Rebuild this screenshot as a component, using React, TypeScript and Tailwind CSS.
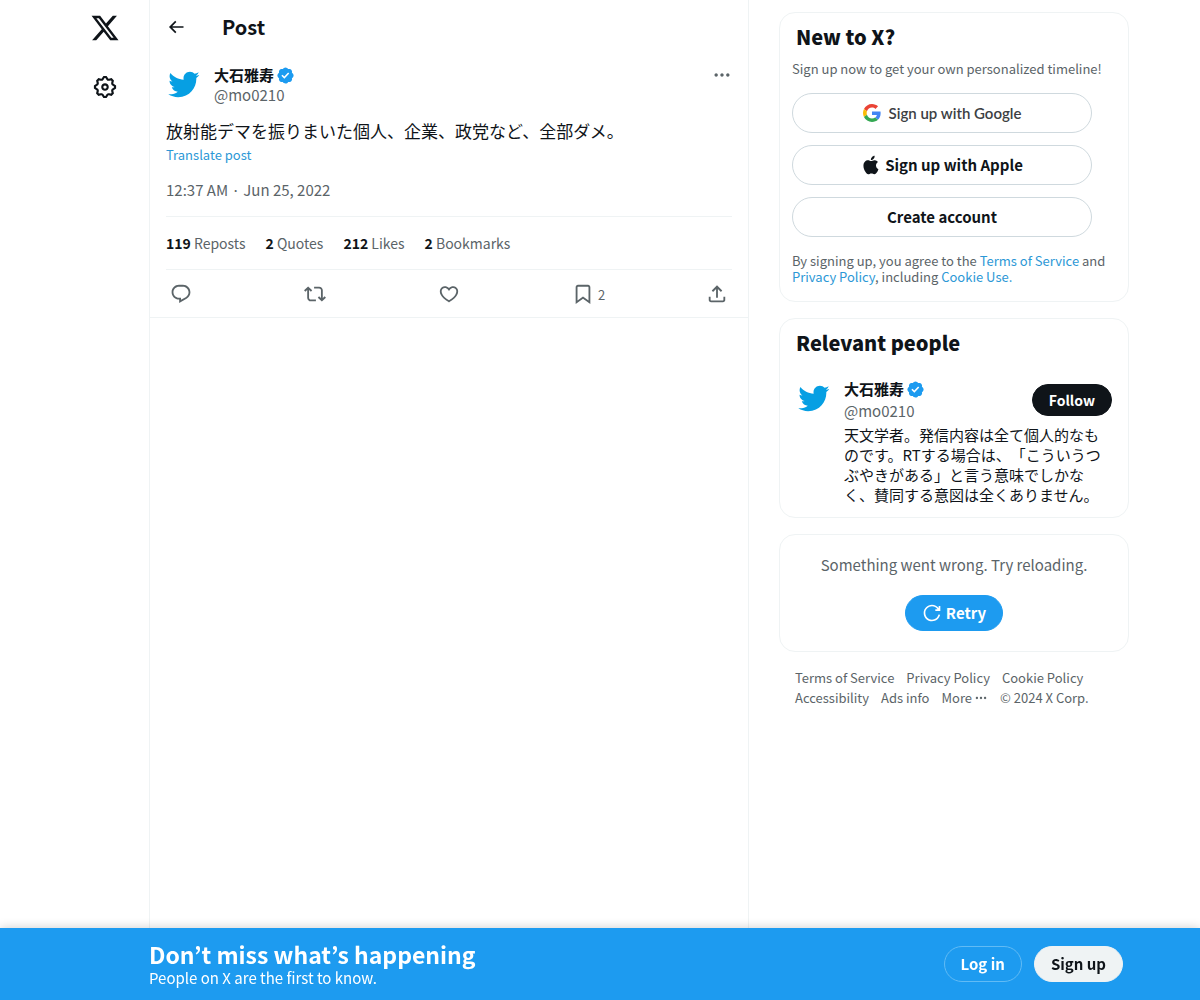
import React from 'react';

const paths = {
  x: 'M18.244 2.25h3.308l-7.227 8.26 8.502 11.24H16.17l-5.214-6.817L4.99 21.75H1.68l7.73-8.835L1.254 2.25H8.08l4.713 6.231zm-1.161 17.52h1.833L7.084 4.126H5.117z',
  settings: 'M10.54 1.75h2.92l1.57 2.36c.11.17.32.25.53.21l2.53-.59 2.17 2.17-.58 2.54c-.05.2.04.41.21.53l2.36 1.57v2.92l-2.36 1.57c-.17.12-.26.33-.21.53l.58 2.54-2.17 2.17-2.53-.59c-.21-.04-.42.04-.53.21l-1.57 2.36h-2.92l-1.58-2.36c-.11-.17-.32-.25-.52-.21l-2.54.59-2.17-2.17.58-2.54c.05-.2-.03-.41-.21-.53l-2.35-1.57v-2.92L4.1 8.97c.18-.12.26-.33.21-.53L3.73 5.9 5.9 3.73l2.54.59c.2.04.41-.04.52-.21l1.58-2.36zm1.07 2l-.98 1.47C10.05 6.08 9 6.5 7.99 6.27l-1.46-.34-.6.6.33 1.46c.24 1.01-.18 2.07-1.05 2.64l-1.46.98v.78l1.46.98c.87.57 1.29 1.63 1.05 2.64l-.33 1.46.6.6 1.46-.34c1.01-.23 2.06.19 2.64 1.05l.98 1.47h.78l.97-1.47c.58-.86 1.63-1.28 2.65-1.05l1.45.34.61-.6-.34-1.46c-.23-1.01.18-2.07 1.05-2.64l1.47-.98v-.78l-1.47-.98c-.87-.57-1.28-1.63-1.05-2.64l.34-1.46-.61-.6-1.45.34c-1.02.23-2.07-.19-2.65-1.05l-.97-1.47h-.78zM12 10.5c-.83 0-1.5.67-1.5 1.5s.67 1.5 1.5 1.5c.82 0 1.5-.67 1.5-1.5s-.68-1.5-1.5-1.5zM8.5 12c0-1.93 1.56-3.5 3.5-3.5 1.93 0 3.5 1.57 3.5 3.5s-1.57 3.5-3.5 3.5c-1.94 0-3.5-1.57-3.5-3.5z',
  back: 'M7.414 13l5.043 5.04-1.414 1.42L3.586 12l7.457-7.46 1.414 1.42L7.414 11H21v2H7.414z',
  more: 'M3 12c0-1.1.9-2 2-2s2 .9 2 2-.9 2-2 2-2-.9-2-2zm9 2c1.1 0 2-.9 2-2s-.9-2-2-2-2 .9-2 2 .9 2 2 2zm7 0c1.1 0 2-.9 2-2s-.9-2-2-2-2 .9-2 2 .9 2 2 2z',
  reply: 'M1.751 10c0-4.42 3.584-8 8.005-8h4.366c4.49 0 8.129 3.64 8.129 8.13 0 2.96-1.607 5.68-4.196 7.11l-8.054 4.46v-3.69h-.067c-4.49.1-8.183-3.51-8.183-8.01zm8.005-6c-3.317 0-6.005 2.69-6.005 6 0 3.37 2.77 6.08 6.138 6.01l.351-.01h1.761v2.3l5.087-2.81c1.951-1.08 3.163-3.13 3.163-5.36 0-3.39-2.744-6.13-6.129-6.13H9.756z',
  repost: 'M4.5 3.88l4.432 4.14-1.364 1.46L5.5 7.55V16c0 1.1.896 2 2 2H13v2H7.5c-2.209 0-4-1.79-4-4V7.55L1.432 9.48.068 8.02 4.5 3.88zM16.5 6H11V4h5.5c2.209 0 4 1.79 4 4v8.45l2.068-1.93 1.364 1.46-4.432 4.14-4.432-4.14 1.364-1.46 2.068 1.93V8c0-1.1-.896-2-2-2z',
  like: 'M16.697 5.5c-1.222-.06-2.679.51-3.89 2.16l-.805 1.09-.806-1.09C9.984 6.01 8.526 5.44 7.304 5.5c-1.243.07-2.349.78-2.91 1.91-.552 1.12-.633 2.78.479 4.82 1.074 1.97 3.257 4.27 7.129 6.61 3.87-2.34 6.052-4.64 7.126-6.61 1.111-2.04 1.03-3.7.477-4.82-.561-1.13-1.666-1.84-2.908-1.91zm4.187 7.69c-1.351 2.48-4.001 5.12-8.379 7.67l-.503.3-.504-.3c-4.379-2.55-7.029-5.19-8.382-7.67-1.36-2.5-1.41-4.86-.514-6.67.887-1.79 2.647-2.91 4.601-3.01 1.651-.09 3.368.56 4.798 2.01 1.429-1.45 3.146-2.1 4.796-2.01 1.954.1 3.714 1.22 4.601 3.01.896 1.81.846 4.17-.514 6.67z',
  bookmark: 'M4 4.5C4 3.12 5.119 2 6.5 2h11C18.881 2 20 3.12 20 4.5v18.44l-8-5.71-8 5.71V4.5zM6.5 4c-.276 0-.5.22-.5.5v14.56l6-4.29 6 4.29V4.5c0-.28-.224-.5-.5-.5h-11z',
  share: 'M12 2.59l5.7 5.7-1.41 1.42L13 6.41V16h-2V6.41l-3.3 3.3-1.41-1.42L12 2.59zM21 15l-.02 3.51c0 1.38-1.12 2.49-2.5 2.49H5.5C4.11 21 3 19.88 3 18.5V15h2v3.5c0 .28.22.5.5.5h12.98c.28 0 .5-.22.5-.5L19 15h2z',
  retry: 'M12 4c-4.418 0-8 3.58-8 8s3.582 8 8 8c3.806 0 6.993-2.66 7.802-6.22l1.95.44C20.742 18.67 16.76 22 12 22 6.477 22 2 17.52 2 12S6.477 2 12 2c3.272 0 6.176 1.57 8 4V3.5h2v6h-6v-2h2.616C17.175 5.39 14.749 4 12 4z',
  apple: 'M16.365 1.43c0 1.14-.493 2.27-1.177 3.08-.744.9-1.99 1.57-2.987 1.57-.12 0-.23-.02-.3-.03-.01-.06-.04-.22-.04-.39 0-1.15.572-2.27 1.206-2.98.804-.94 2.142-1.64 3.248-1.68.03.13.05.28.05.43zm4.565 15.71c-.03.07-.463 1.58-1.518 3.12-.945 1.34-1.94 2.71-3.43 2.71-1.517 0-1.9-.88-3.63-.88-1.698 0-2.302.91-3.67.91-1.377 0-2.332-1.26-3.428-2.8-1.287-1.82-2.323-4.63-2.323-7.28 0-4.28 2.797-6.55 5.552-6.55 1.448 0 2.675.95 3.6.95.865 0 2.222-1.01 3.902-1.01.613 0 2.886.06 4.374 2.19-.13.09-2.383 1.37-2.383 4.19 0 3.26 2.854 4.42 2.955 4.45z',
  bird: 'M23.643 4.937c-.835.37-1.732.62-2.675.733.962-.576 1.7-1.49 2.048-2.578-.9.534-1.897.922-2.958 1.13-.85-.904-2.06-1.47-3.4-1.47-2.572 0-4.658 2.086-4.658 4.66 0 .364.042.718.12 1.06-3.873-.195-7.304-2.05-9.602-4.868-.4.69-.63 1.49-.63 2.342 0 1.616.823 3.043 2.072 3.878-.764-.025-1.482-.234-2.11-.583v.06c0 2.257 1.605 4.14 3.737 4.568-.392.106-.803.162-1.227.162-.3 0-.593-.028-.877-.082.593 1.85 2.313 3.198 4.352 3.234-1.595 1.25-3.604 1.995-5.786 1.995-.376 0-.747-.022-1.112-.065 2.062 1.323 4.51 2.093 7.14 2.093 8.57 0 13.255-7.098 13.255-13.254 0-.2-.005-.402-.014-.602.91-.658 1.7-1.477 2.323-2.41z',
};

const Icon = ({ name, className }: { name: keyof typeof paths; className: string }) => (
  <svg viewBox="0 0 24 24" fill="currentColor" aria-hidden="true" className={`shrink-0 ${className}`}>
    <path d={paths[name]} />
  </svg>
);

const VerifiedBadge = () => (
  <svg viewBox="0 0 22 22" fill="#1d9bf0" aria-label="Verified account" className="w-[19px] h-[19px] shrink-0">
    <path d="M20.396 11c-.018-.646-.215-1.275-.57-1.816-.354-.54-.852-.972-1.438-1.246.223-.607.27-1.264.14-1.897-.131-.634-.437-1.218-.882-1.687-.47-.445-1.053-.75-1.687-.882-.633-.13-1.29-.083-1.897.14-.273-.587-.704-1.086-1.245-1.44S11.647 1.62 11 1.604c-.646.017-1.273.213-1.813.568s-.969.854-1.24 1.44c-.608-.223-1.267-.272-1.902-.14-.635.13-1.22.436-1.69.882-.445.47-.749 1.055-.878 1.688-.13.633-.08 1.29.144 1.896-.587.274-1.087.705-1.443 1.245-.356.54-.555 1.17-.574 1.817.02.647.218 1.276.574 1.817.356.54.856.972 1.443 1.245-.224.606-.274 1.263-.144 1.896.13.634.433 1.218.877 1.688.47.443 1.054.747 1.687.878.633.132 1.29.084 1.897-.136.274.586.705 1.084 1.246 1.439.54.354 1.17.551 1.816.569.647-.016 1.276-.213 1.817-.567s.972-.854 1.245-1.44c.604.239 1.266.296 1.903.164.636-.132 1.22-.447 1.68-.907.46-.46.776-1.044.908-1.681s.075-1.299-.165-1.903c.586-.274 1.084-.705 1.439-1.246.354-.54.551-1.17.569-1.816zM9.662 14.85l-3.429-3.428 1.293-1.302 2.072 2.072 4.4-4.794 1.347 1.246z" />
  </svg>
);

const GoogleLogo = () => (
  <svg viewBox="0 0 48 48" aria-hidden="true" className="w-[18px] h-[18px] shrink-0">
    <path fill="#EA4335" d="M24 9.5c3.54 0 6.71 1.22 9.21 3.6l6.85-6.85C35.9 2.38 30.47 0 24 0 14.62 0 6.51 5.38 2.56 13.22l7.98 6.19C12.43 13.72 17.74 9.5 24 9.5z" />
    <path fill="#4285F4" d="M46.98 24.55c0-1.57-.15-3.09-.38-4.55H24v9.02h12.94c-.58 2.96-2.26 5.48-4.78 7.18l7.73 6c4.51-4.18 7.09-10.36 7.09-17.65z" />
    <path fill="#FBBC05" d="M10.53 28.59c-.48-1.45-.76-2.99-.76-4.59s.27-3.14.76-4.59l-7.98-6.19C.92 16.46 0 20.12 0 24c0 3.88.92 7.54 2.56 10.78l7.97-6.19z" />
    <path fill="#34A853" d="M24 48c6.48 0 11.93-2.13 15.89-5.81l-7.73-6c-2.15 1.45-4.92 2.3-8.16 2.3-6.26 0-11.57-4.22-13.47-9.91l-7.98 6.19C6.51 42.62 14.62 48 24 48z" />
  </svg>
);

const Avatar = () => (
  <a href="#profile" aria-label="大石雅寿" className="w-10 h-10 shrink-0 pl-px pt-[3px]">
    <Icon name="bird" className="w-[33px] h-[33px] text-[#069fe3]" />
  </a>
);

const UserName = ({ className = '' }: { className?: string }) => (
  <div className={`flex flex-col text-[15px] leading-5 ${className}`}>
    <div className="flex items-center gap-0.5">
      <a href="#profile" className="font-bold">大石雅寿</a>
      <VerifiedBadge />
    </div>
    <a href="#profile" className="text-[#5b6468]">@mo0210</a>
  </div>
);

const stats = [
  { count: 119, label: 'Reposts' },
  { count: 2, label: 'Quotes' },
  { count: 212, label: 'Likes' },
  { count: 2, label: 'Bookmarks' },
];

const footerLinks = ['Terms of Service', 'Privacy Policy', 'Cookie Policy', 'Accessibility', 'Ads info'];

const signupButton = 'w-[300px] h-10 flex items-center justify-center rounded-full border border-[#cfd9de]';
const card = 'rounded-2xl border border-[#eff3f4]';
const link = 'text-[#2c98d6] hover:underline';

const App = () => {
  return (
    <div className="min-h-screen bg-white text-[#0f1419] font-['Noto_Sans_CJK_JP',sans-serif]">
      <div className="flex justify-center">
        <header className="w-[68px] mr-2.5 shrink-0 flex flex-col items-center">
          <a href="#home" aria-label="X" className="h-14 flex items-center">
            <Icon name="x" className="w-[30px] h-[30px]" />
          </a>
          <a href="#settings" aria-label="Settings" className="h-[62px] flex items-center">
            <Icon name="settings" className="w-[26px] h-[26px]" />
          </a>
        </header>

        <main className="w-full max-w-[600px] min-h-screen border-x border-[#eff3f4]">
          <div className="h-[53px] px-4 flex items-center">
            <button aria-label="Back" className="w-14">
              <Icon name="back" className="w-5 h-5" />
            </button>
            <h1 className="text-xl leading-6 font-bold">Post</h1>
          </div>

          <article className="px-4 pt-3 border-b border-[#eff3f4]">
            <div className="flex items-start">
              <Avatar />
              <div className="flex-1 ml-2">
                <UserName />
              </div>
              <button aria-label="More" className="text-[#5b6468]">
                <Icon name="more" className="w-5 h-5" />
              </button>
            </div>

            <p className="mt-3.5 text-[17px] leading-6">放射能デマを振りまいた個人、企業、政党など、全部ダメ。</p>
            <button className="block mt-0.5 text-[13px] leading-5 text-[#2c98d6]">Translate post</button>
            <div className="mt-[15px] mb-4 text-[15px] leading-5 text-[#5b6468]">
              <a href="#time">12:37 AM · Jun 25, 2022</a>
            </div>

            <div className="flex gap-5 py-4 border-y border-[#eff3f4] text-sm leading-5">
              {stats.map((stat) => (
                <a key={stat.label} href="#stats" className="text-[#5b6468]">
                  <span className="font-bold text-[#0f1419]">{stat.count}</span> {stat.label}
                </a>
              ))}
            </div>

            <div className="h-[47px] flex items-center px-1 text-[#5b6468]">
              <div className="flex-1 flex">
                <button aria-label="Reply"><Icon name="reply" className="w-[22px] h-[22px]" /></button>
              </div>
              <div className="flex-1 flex">
                <button aria-label="Repost"><Icon name="repost" className="w-[22px] h-[22px]" /></button>
              </div>
              <div className="flex-1 flex">
                <button aria-label="Like"><Icon name="like" className="w-[22px] h-[22px]" /></button>
              </div>
              <div className="flex-1 flex">
                <button aria-label="Bookmark" className="flex items-end gap-1 text-[13px] leading-5">
                  <Icon name="bookmark" className="w-[22px] h-[22px]" />
                  2
                </button>
              </div>
              <button aria-label="Share"><Icon name="share" className="w-[22px] h-[22px]" /></button>
            </div>
          </article>
        </main>

        <aside className="w-[350px] ml-[30px] shrink-0 pt-3 pb-20 flex flex-col gap-4">
          <section className={`${card} px-3 pt-3 pb-4`}>
            <h2 className="px-1 text-xl leading-6 font-extrabold">New to X?</h2>
            <p className="mt-3 text-[13px] leading-4 text-[#5b6468]">
              Sign up now to get your own personalized timeline!
            </p>
            <div className="mt-4 flex flex-col gap-3">
              <button className={`${signupButton} gap-2 text-[15px] font-semibold text-[#3c4043] font-['Lato',sans-serif]`}>
                <GoogleLogo />
                Sign up with Google
              </button>
              <button className={`${signupButton} gap-1 text-[15px] font-bold`}>
                <Icon name="apple" className="w-5 h-5" />
                Sign up with Apple
              </button>
              <button className={`${signupButton} text-[15px] font-bold`}>Create account</button>
            </div>
            <p className="mt-4 text-[13px] leading-4 text-[#5b6468]">
              By signing up, you agree to the <a href="#tos" className={link}>Terms of Service</a> and{' '}
              <a href="#privacy" className={link}>Privacy Policy</a>, including{' '}
              <a href="#cookies" className={link}>Cookie Use.</a>
            </p>
          </section>

          <section className={`${card} px-4 py-3`}>
            <h2 className="text-xl leading-6 font-extrabold">Relevant people</h2>
            <div className="mt-6 flex">
              <Avatar />
              <div className="flex-1 ml-2">
                <div className="flex items-center justify-between">
                  <UserName className="gap-0.5" />
                  <button className="h-8 px-4 rounded-full border border-[#0f1419] bg-[#0f1419] text-white text-sm font-bold">
                    Follow
                  </button>
                </div>
                <p className="mt-1 text-[15px] leading-5 [text-spacing-trim:space-all]">
                  天文学者。発信内容は全て個人的なものです。RTする場合は、「こういうつぶやきがある」と言う意味でしかなく、賛同する意図は全くありません。
                </p>
              </div>
            </div>
          </section>

          <section className={`${card} flex flex-col items-center py-5`}>
            <p className="text-[15px] leading-5 text-[#5b6468]">Something went wrong. Try reloading.</p>
            <button className="mt-5 h-9 px-4 flex items-center gap-1 rounded-full border border-[#1d9bf0] bg-[#1d9bf0] text-white text-[15px] font-bold">
              <Icon name="retry" className="w-5 h-5" />
              Retry
            </button>
          </section>

          <nav className="px-4 flex flex-wrap gap-x-3 text-[13px] leading-5 text-[#5b6468]">
            {footerLinks.map((label) => (
              <a key={label} href="#footer" className="hover:underline">{label}</a>
            ))}
            <button className="flex items-center gap-0.5">
              More
              <Icon name="more" className="w-[14px] h-[14px]" />
            </button>
            <span>© 2024 X Corp.</span>
          </nav>
        </aside>
      </div>

      {/* Logged-out bar */}
      <div className="fixed inset-x-0 bottom-0 bg-[#1d9bf0] text-white shadow-[0_0_10px_rgba(0,0,0,0.2)]">
        <div className="max-w-[1058px] h-[72px] mx-auto pl-[78px] pr-1.5 flex items-center justify-between">
          <div>
            <div className="text-[23px] leading-7 font-bold">Don’t miss what’s happening</div>
            <div className="text-[15px] leading-5">People on X are the first to know.</div>
          </div>
          <div className="flex gap-3 text-[15px] font-bold">
            <button className="h-9 px-4 rounded-full border border-[#61bbf5]">Log in</button>
            <button className="h-9 px-4 rounded-full border border-[#eff3f4] bg-[#eff3f4] text-[#0f1419]">Sign up</button>
          </div>
        </div>
      </div>
    </div>
  );
};

export default App;
